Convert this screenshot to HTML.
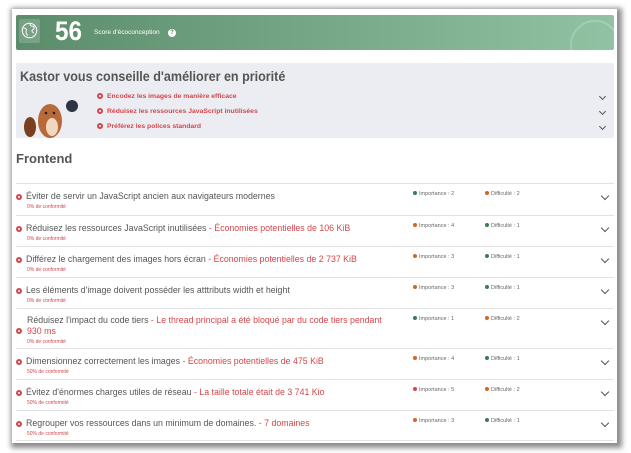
<!DOCTYPE html>
<html><head><meta charset="utf-8"><style>
*{margin:0;padding:0;box-sizing:border-box}
body{width:631px;height:453px;background:#fff;font-family:"Liberation Sans",sans-serif;position:relative;overflow:hidden;color:#555}
.panel{position:absolute;left:12px;top:9px;width:605px;height:434px;background:#fff;box-shadow:2px 2px 5px 3px rgba(0,0,0,.45)}
.green{position:absolute;left:16px;top:15px;width:598px;height:35px;background:linear-gradient(90deg,#5b8c6b,#90c3a3);border-radius:2px}
.globe{position:absolute;left:19px;top:19px;width:21px;height:24px;background:rgba(255,255,255,.18);border-radius:2px}
.score{position:absolute;left:55px;top:16px;font-size:27px;font-weight:bold;color:#fff;transform:scaleX(.9);transform-origin:left}
.slabel{position:absolute;left:94px;top:29px;font-size:6.5px;color:#fff}
.q{position:absolute;left:168px;top:29px;width:8px;height:8px;border-radius:50%;background:#fff;color:#5b8c6b;font-size:6px;text-align:center;line-height:8px;font-weight:bold}
.kastor{position:absolute;left:16px;top:63px;width:598px;height:75px;background:#ecedf2;border-radius:2px}
.kt{position:absolute;left:20px;top:69px;font-size:13.5px;font-weight:bold;color:#555;transform:scaleX(.93);transform-origin:left}
.ki{position:absolute;left:97px;font-size:6.8px;font-weight:bold;color:#d2474c}
.dot{display:inline-block;width:6px;height:6px;border-radius:50%;background:#d2474c;vertical-align:-1px;margin-right:4px;position:relative}
.dot::after{content:"";position:absolute;left:2px;top:2px;width:2px;height:2px;background:#fff;border-radius:50%}
.chev{position:absolute;width:6px;height:6px;border-right:1.6px solid #555;border-bottom:1.6px solid #555;transform:rotate(45deg)}
.fh{position:absolute;left:16px;top:151px;font-size:13px;font-weight:bold;color:#555}
.row{position:absolute;left:16px;width:598px;border-top:1px solid #e2e2e2}
.rt{position:absolute;left:0;top:7px;font-size:8.8px;color:#555;width:380px;line-height:11px}
.rt .r{color:#d2474c}
.rs{position:absolute;left:11px;font-size:5px;color:#d2474c}
.m{position:absolute;top:7px;font-size:5.5px;color:#666}
.m i{display:inline-block;width:4px;height:4px;border-radius:50%;margin-right:2px;vertical-align:0}
.g{background:#3e7a50}.o{background:#d4661e}.rd{background:#d2474c}
</style></head><body>
<div class="panel"></div>
<div class="green"></div>
<svg style="position:absolute;left:560px;top:15px" width="54" height="35"><circle cx="35" cy="30" r="24" fill="none" stroke="rgba(255,255,255,.2)" stroke-width="2"/></svg>
<div class="globe"></div>
<svg style="position:absolute;left:21px;top:22px" width="17" height="17" viewBox="0 0 20 20"><circle cx="10" cy="10" r="8.5" fill="none" stroke="#fff" stroke-width="1.2"/><path d="M3 7c3 0 4 2 3 4s1 3 2 5M11 2c-1 2 1 3 3 3s2 3 0 4-1 3 1 4" fill="none" stroke="#fff" stroke-width="1.1"/></svg>
<div class="score">56</div>
<div class="slabel">Score d'écoconception</div>
<div class="q">?</div>
<div class="kastor"></div>
<div class="kt">Kastor vous conseille d'améliorer en priorité</div>
<svg style="position:absolute;left:20px;top:97px" width="60" height="42"><ellipse cx="10" cy="30" rx="6" ry="10" fill="#7a3e20"/><ellipse cx="30" cy="24" rx="12" ry="17" fill="#b8693a"/><ellipse cx="32" cy="30" rx="6" ry="9" fill="#f0d7c0"/><circle cx="26" cy="16" r="1.3" fill="#222"/><circle cx="34" cy="16" r="1.3" fill="#222"/><circle cx="52" cy="9" r="6" fill="#2d3545"/></svg>
<div class="ki" style="top:93px"><span class="dot"></span>Encodez les images de manière efficace</div>
<div class="ki" style="top:108px"><span class="dot"></span>Réduisez les ressources JavaScript inutilisées</div>
<div class="ki" style="top:123px"><span class="dot"></span>Préférez les polices standard</div>
<div class="chev" style="left:600px;top:94px;width:5px;height:5px;border-width:1.2px"></div>
<div class="chev" style="left:600px;top:109px;width:5px;height:5px;border-width:1.2px"></div>
<div class="chev" style="left:600px;top:124px;width:5px;height:5px;border-width:1.2px"></div>
<div class="fh">Frontend</div>

<div class="row" style="top:183px;height:32px"><div class="rt"><span class="dot"></span>Éviter de servir un JavaScript ancien aux navigateurs modernes</div><div class="rs" style="top:20px">0% de conformité</div><div class="m" style="left:397px"><i class="g"></i>Importance : 2</div><div class="m" style="left:469px"><i class="o"></i>Difficulté : 2</div><div class="chev" style="left:586px;top:9px"></div></div>
<div class="row" style="top:215px;height:31px"><div class="rt"><span class="dot"></span>Réduisez les ressources JavaScript inutilisées <span class="r">- Économies potentielles de 106 KiB</span></div><div class="rs" style="top:20px">0% de conformité</div><div class="m" style="left:397px"><i class="o"></i>Importance : 4</div><div class="m" style="left:469px"><i class="g"></i>Difficulté : 1</div><div class="chev" style="left:586px;top:9px"></div></div>
<div class="row" style="top:246px;height:31px"><div class="rt"><span class="dot"></span>Différez le chargement des images hors écran <span class="r">- Économies potentielles de 2 737 KiB</span></div><div class="rs" style="top:20px">0% de conformité</div><div class="m" style="left:397px"><i class="o"></i>Importance : 3</div><div class="m" style="left:469px"><i class="g"></i>Difficulté : 1</div><div class="chev" style="left:586px;top:9px"></div></div>
<div class="row" style="top:277px;height:31px"><div class="rt"><span class="dot"></span>Les éléments d'image doivent posséder les atttributs width et height</div><div class="rs" style="top:20px">0% de conformité</div><div class="m" style="left:397px"><i class="o"></i>Importance : 3</div><div class="m" style="left:469px"><i class="g"></i>Difficulté : 1</div><div class="chev" style="left:586px;top:9px"></div></div>
<div class="row" style="top:308px;height:40px"><div class="rt" style="left:11px;top:6px;width:370px">Réduisez l'impact du code tiers <span class="r">- Le thread principal a été bloqué par du code tiers pendant 930 ms</span></div><span class="dot" style="position:absolute;left:0;top:19px"></span><div class="rs" style="top:30px">0% de conformité</div><div class="m" style="left:397px"><i class="g"></i>Importance : 1</div><div class="m" style="left:469px"><i class="o"></i>Difficulté : 2</div><div class="chev" style="left:586px;top:9px"></div></div>
<div class="row" style="top:348px;height:31px"><div class="rt"><span class="dot"></span>Dimensionnez correctement les images <span class="r">- Économies potentielles de 475 KiB</span></div><div class="rs" style="top:20px">50% de conformité</div><div class="m" style="left:397px"><i class="o"></i>Importance : 4</div><div class="m" style="left:469px"><i class="g"></i>Difficulté : 1</div><div class="chev" style="left:586px;top:9px"></div></div>
<div class="row" style="top:379px;height:31px"><div class="rt"><span class="dot"></span>Évitez d'énormes charges utiles de réseau <span class="r">- La taille totale était de 3 741 Kio</span></div><div class="rs" style="top:20px">50% de conformité</div><div class="m" style="left:397px"><i class="rd"></i>Importance : 5</div><div class="m" style="left:469px"><i class="o"></i>Difficulté : 2</div><div class="chev" style="left:586px;top:9px"></div></div>
<div class="row" style="top:410px;height:31px;border-bottom:1px solid #e2e2e2"><div class="rt"><span class="dot"></span>Regrouper vos ressources dans un minimum de domaines. <span class="r">- 7 domaines</span></div><div class="rs" style="top:20px">50% de conformité</div><div class="m" style="left:397px"><i class="o"></i>Importance : 3</div><div class="m" style="left:469px"><i class="g"></i>Difficulté : 1</div><div class="chev" style="left:586px;top:9px"></div></div>
</body></html>
